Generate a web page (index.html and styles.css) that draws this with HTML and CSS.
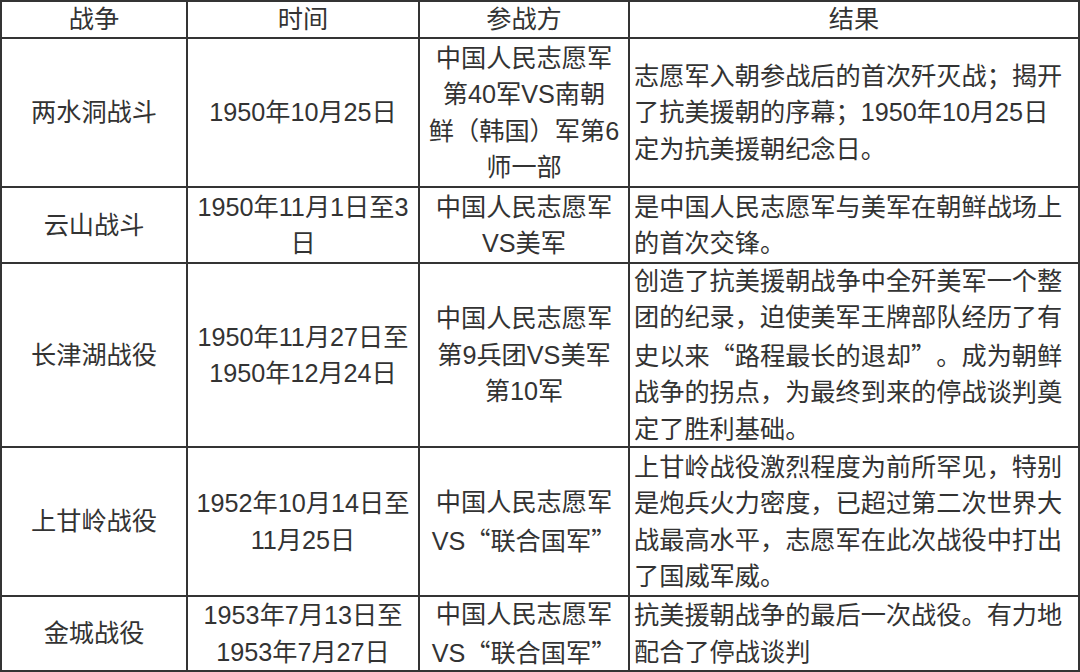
FILE: index.html
```html
<!DOCTYPE html>
<html lang="zh-CN">
<head>
<meta charset="utf-8">
<title>抗美援朝主要战役</title>
<link rel="stylesheet" href="styles.css">
</head>
<body>
<div class="table">
  <div class="cell head"><div class="txt">战争</div></div>
  <div class="cell head"><div class="txt">时间</div></div>
  <div class="cell head"><div class="txt">参战方</div></div>
  <div class="cell head"><div class="txt">结果</div></div>

  <div class="cell"><div class="txt">两水洞战斗</div></div>
  <div class="cell"><div class="txt">1950年10月25日</div></div>
  <div class="cell"><div class="txt">中国人民志愿军<br>第40军VS南朝<br>鲜（韩国）军第6<br>师一部</div></div>
  <div class="cell left"><div class="txt">志愿军入朝参战后的首次歼灭战；揭开<br>了抗美援朝的序幕；1950年10月25日<br>定为抗美援朝纪念日。</div></div>

  <div class="cell"><div class="txt">云山战斗</div></div>
  <div class="cell"><div class="txt">1950年11月1日至3<br>日</div></div>
  <div class="cell"><div class="txt">中国人民志愿军<br>VS美军</div></div>
  <div class="cell left"><div class="txt">是中国人民志愿军与美军在朝鲜战场上<br>的首次交锋。</div></div>

  <div class="cell"><div class="txt">长津湖战役</div></div>
  <div class="cell"><div class="txt">1950年11月27日至<br>1950年12月24日</div></div>
  <div class="cell"><div class="txt">中国人民志愿军<br>第9兵团VS美军<br>第10军</div></div>
  <div class="cell left"><div class="txt">创造了抗美援朝战争中全歼美军一个整<br>团的纪录，迫使美军王牌部队经历了有<br>史以来<span class="q-open">“</span>路程最长的退却<span class="q-close">”</span>。成为朝鲜<br>战争的拐点，为最终到来的停战谈判奠<br>定了胜利基础。</div></div>

  <div class="cell"><div class="txt">上甘岭战役</div></div>
  <div class="cell"><div class="txt">1952年10月14日至<br>11月25日</div></div>
  <div class="cell"><div class="txt">中国人民志愿军<br>VS<span class="q-open">“</span>联合国军<span class="q-close">”</span></div></div>
  <div class="cell left"><div class="txt">上甘岭战役激烈程度为前所罕见，特别<br>是炮兵火力密度，已超过第二次世界大<br>战最高水平，志愿军在此次战役中打出<br>了国威军威。</div></div>

  <div class="cell"><div class="txt">金城战役</div></div>
  <div class="cell"><div class="txt">1953年7月13日至<br>1953年7月27日</div></div>
  <div class="cell"><div class="txt">中国人民志愿军<br>VS<span class="q-open">“</span>联合国军<span class="q-close">”</span></div></div>
  <div class="cell left"><div class="txt">抗美援朝战争的最后一次战役。有力地<br>配合了停战谈判</div></div>
</div>
</body>
</html>
```

FILE: styles.css
```css
html, body {
  margin: 0;
  padding: 0;
  background: #ffffff;
}

.table {
  width: 1080px;
  height: 672px;
  box-sizing: border-box;
  display: grid;
  grid-template-columns: 184px 230px 208px 448px;
  grid-template-rows: 35px 147px 74px 182px 147px 73px;
  gap: 2px;
  padding: 2px;
  background: #343434;
  font-family: "Liberation Sans", "Noto Sans CJK SC", sans-serif;
  font-size: 25.2px;
  line-height: 36.5px;
  color: #333333;
}

.cell {
  background: #ffffff;
  display: flex;
  align-items: center;
  justify-content: center;
  text-align: center;
  white-space: nowrap;
  overflow: hidden;
}

.cell.head {
  line-height: 35px;
}

.cell.left {
  justify-content: flex-start;
  text-align: left;
  padding: 0 4px;
}

.txt {
  display: block;
}

.q-open,
.q-close {
  display: inline-block;
  width: 1em;
  font-family: "Noto Sans CJK SC", sans-serif;
}

.q-open {
  text-align: right;
}

.q-close {
  text-align: left;
}
```
